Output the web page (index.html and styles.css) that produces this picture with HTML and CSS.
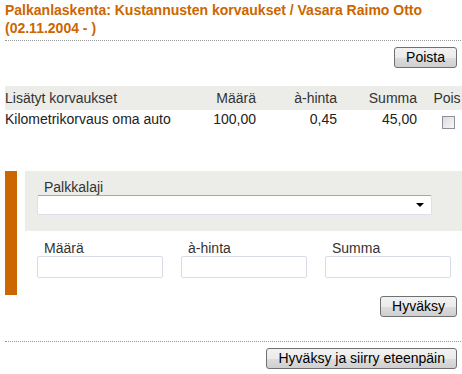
FILE: index.html
```html
<!DOCTYPE html>
<html lang="fi">
<head>
  <meta charset="UTF-8">
  <title>Kustannusten korvaukset</title>
  <link rel="stylesheet" href="styles.css">
</head>
<body>
  <div class="page">
    <h1 class="title">Palkanlaskenta: Kustannusten korvaukset / Vasara Raimo Otto (02.11.2004 - )</h1>

    <div class="actions">
      <button class="btn">Poista</button>
    </div>

    <!-- Added compensations -->
    <table class="list">
      <colgroup>
        <col class="c-name">
        <col class="c-num">
        <col class="c-price">
        <col class="c-sum">
        <col class="c-del">
      </colgroup>
      <thead>
        <tr>
          <th class="left">Lisätyt korvaukset</th>
          <th>Määrä</th>
          <th>à-hinta</th>
          <th>Summa</th>
          <th class="center">Pois</th>
        </tr>
      </thead>
      <tbody>
        <tr>
          <td class="left">Kilometrikorvaus oma auto</td>
          <td>100,00</td>
          <td>0,45</td>
          <td>45,00</td>
          <td class="center"><span class="check"></span></td>
        </tr>
      </tbody>
    </table>

    <!-- New compensation form -->
    <div class="form">
      <div class="marker"></div>
      <div class="form-body">
        <div class="form-top">
          <label class="lbl">Palkkalaji</label>
          <div class="select"><span class="arrow"></span></div>
        </div>
        <div class="fields">
          <div class="field">
            <label class="lbl">Määrä</label>
            <div class="input"></div>
          </div>
          <div class="field">
            <label class="lbl">à-hinta</label>
            <div class="input"></div>
          </div>
          <div class="field">
            <label class="lbl">Summa</label>
            <div class="input"></div>
          </div>
        </div>
      </div>
    </div>

    <div class="actions tight">
      <button class="btn">Hyväksy</button>
    </div>

    <div class="footer-actions">
      <button class="btn">Hyväksy ja siirry eteenpäin</button>
    </div>
  </div>
</body>
</html>
```

FILE: styles.css
```css
html, body {
  margin: 0;
  overflow: hidden;
}
body {
  font-family: "Liberation Sans", Arial, sans-serif;
  font-size: 14px;
  color: #222;
  background: #fff;
}
.page {
  padding-left: 5px;
  width: 472px;
}

.title {
  margin: 0;
  padding: 1px 30px 3px 0;
  font-size: 14px;
  line-height: 18px;
  font-weight: bold;
  color: #cc6600;
  border-bottom: 1px dotted #999;
}

.actions {
  display: flex;
  justify-content: flex-end;
  padding-right: 20px;
  margin-top: 6px;
}
.actions.tight {
  margin-top: 1px;
}

.btn {
  font-family: "Liberation Sans", Arial, sans-serif;
  font-size: 14px;
  color: #000;
  height: 21px;
  padding: 0 11px;
  border: 1px solid #707070;
  border-radius: 3px;
  background: linear-gradient(#f2f2f2, #ebebeb 50%, #dddddd 51%, #cfcfcf);
  line-height: 19px;
}

/* Table */
.list {
  margin-top: 18px;
  border-collapse: collapse;
  table-layout: fixed;
  width: 472px;
}
.c-name { width: 195px; }
.c-num { width: 56px; }
.c-price { width: 81px; }
.c-sum { width: 80px; }
.c-del { width: 60px; }
.list th, .list td {
  padding: 0;
  text-align: right;
  font-weight: normal;
  white-space: nowrap;
}
.list th {
  background: #ecece8;
  height: 24px;
  color: #333;
}
.list td {
  height: 18px;
  vertical-align: top;
  padding-top: 1px;
}
.list .left { text-align: left; }
.list .center { text-align: center; }
.check {
  display: inline-block;
  width: 11px;
  height: 11px;
  margin-top: 5px;
  margin-left: 2px;
  border: 1px solid #8f8f9d;
  background: linear-gradient(135deg, #dcdcdc, #f7f7f7);
}

/* Form */
.form {
  display: flex;
  margin-top: 39px;
}
.marker {
  width: 12px;
  height: 124px;
  background: #cc6600;
  margin-right: 8px;
}
.form-body {
  flex: 1;
}
.form-top {
  background: #ecece8;
  padding: 8px 0 16px 12px;
}
.lbl {
  display: block;
  padding-left: 7px;
  line-height: 16px;
  color: #333;
}
.select {
  position: relative;
  width: 393px;
  height: 18px;
  background: #fff;
  border: 1px solid #dde0e8;
  border-top-color: #a6a6ae;
  border-radius: 2px;
}
.arrow {
  position: absolute;
  right: 7px;
  top: 7px;
  border-left: 4px solid transparent;
  border-right: 4px solid transparent;
  border-top: 4px solid #000;
}
.fields {
  display: flex;
  gap: 18px;
  padding: 9px 0 0 12px;
}
.field {
  width: 126px;
}
.input {
  width: 124px;
  height: 20px;
  border: 1px solid #d8dce4;
  border-radius: 2px;
  background: #fff;
}

.footer-actions {
  display: flex;
  justify-content: flex-end;
  padding-right: 20px;
  margin-top: 24px;
  padding-top: 6px;
  border-top: 1px dotted #999;
}
```
